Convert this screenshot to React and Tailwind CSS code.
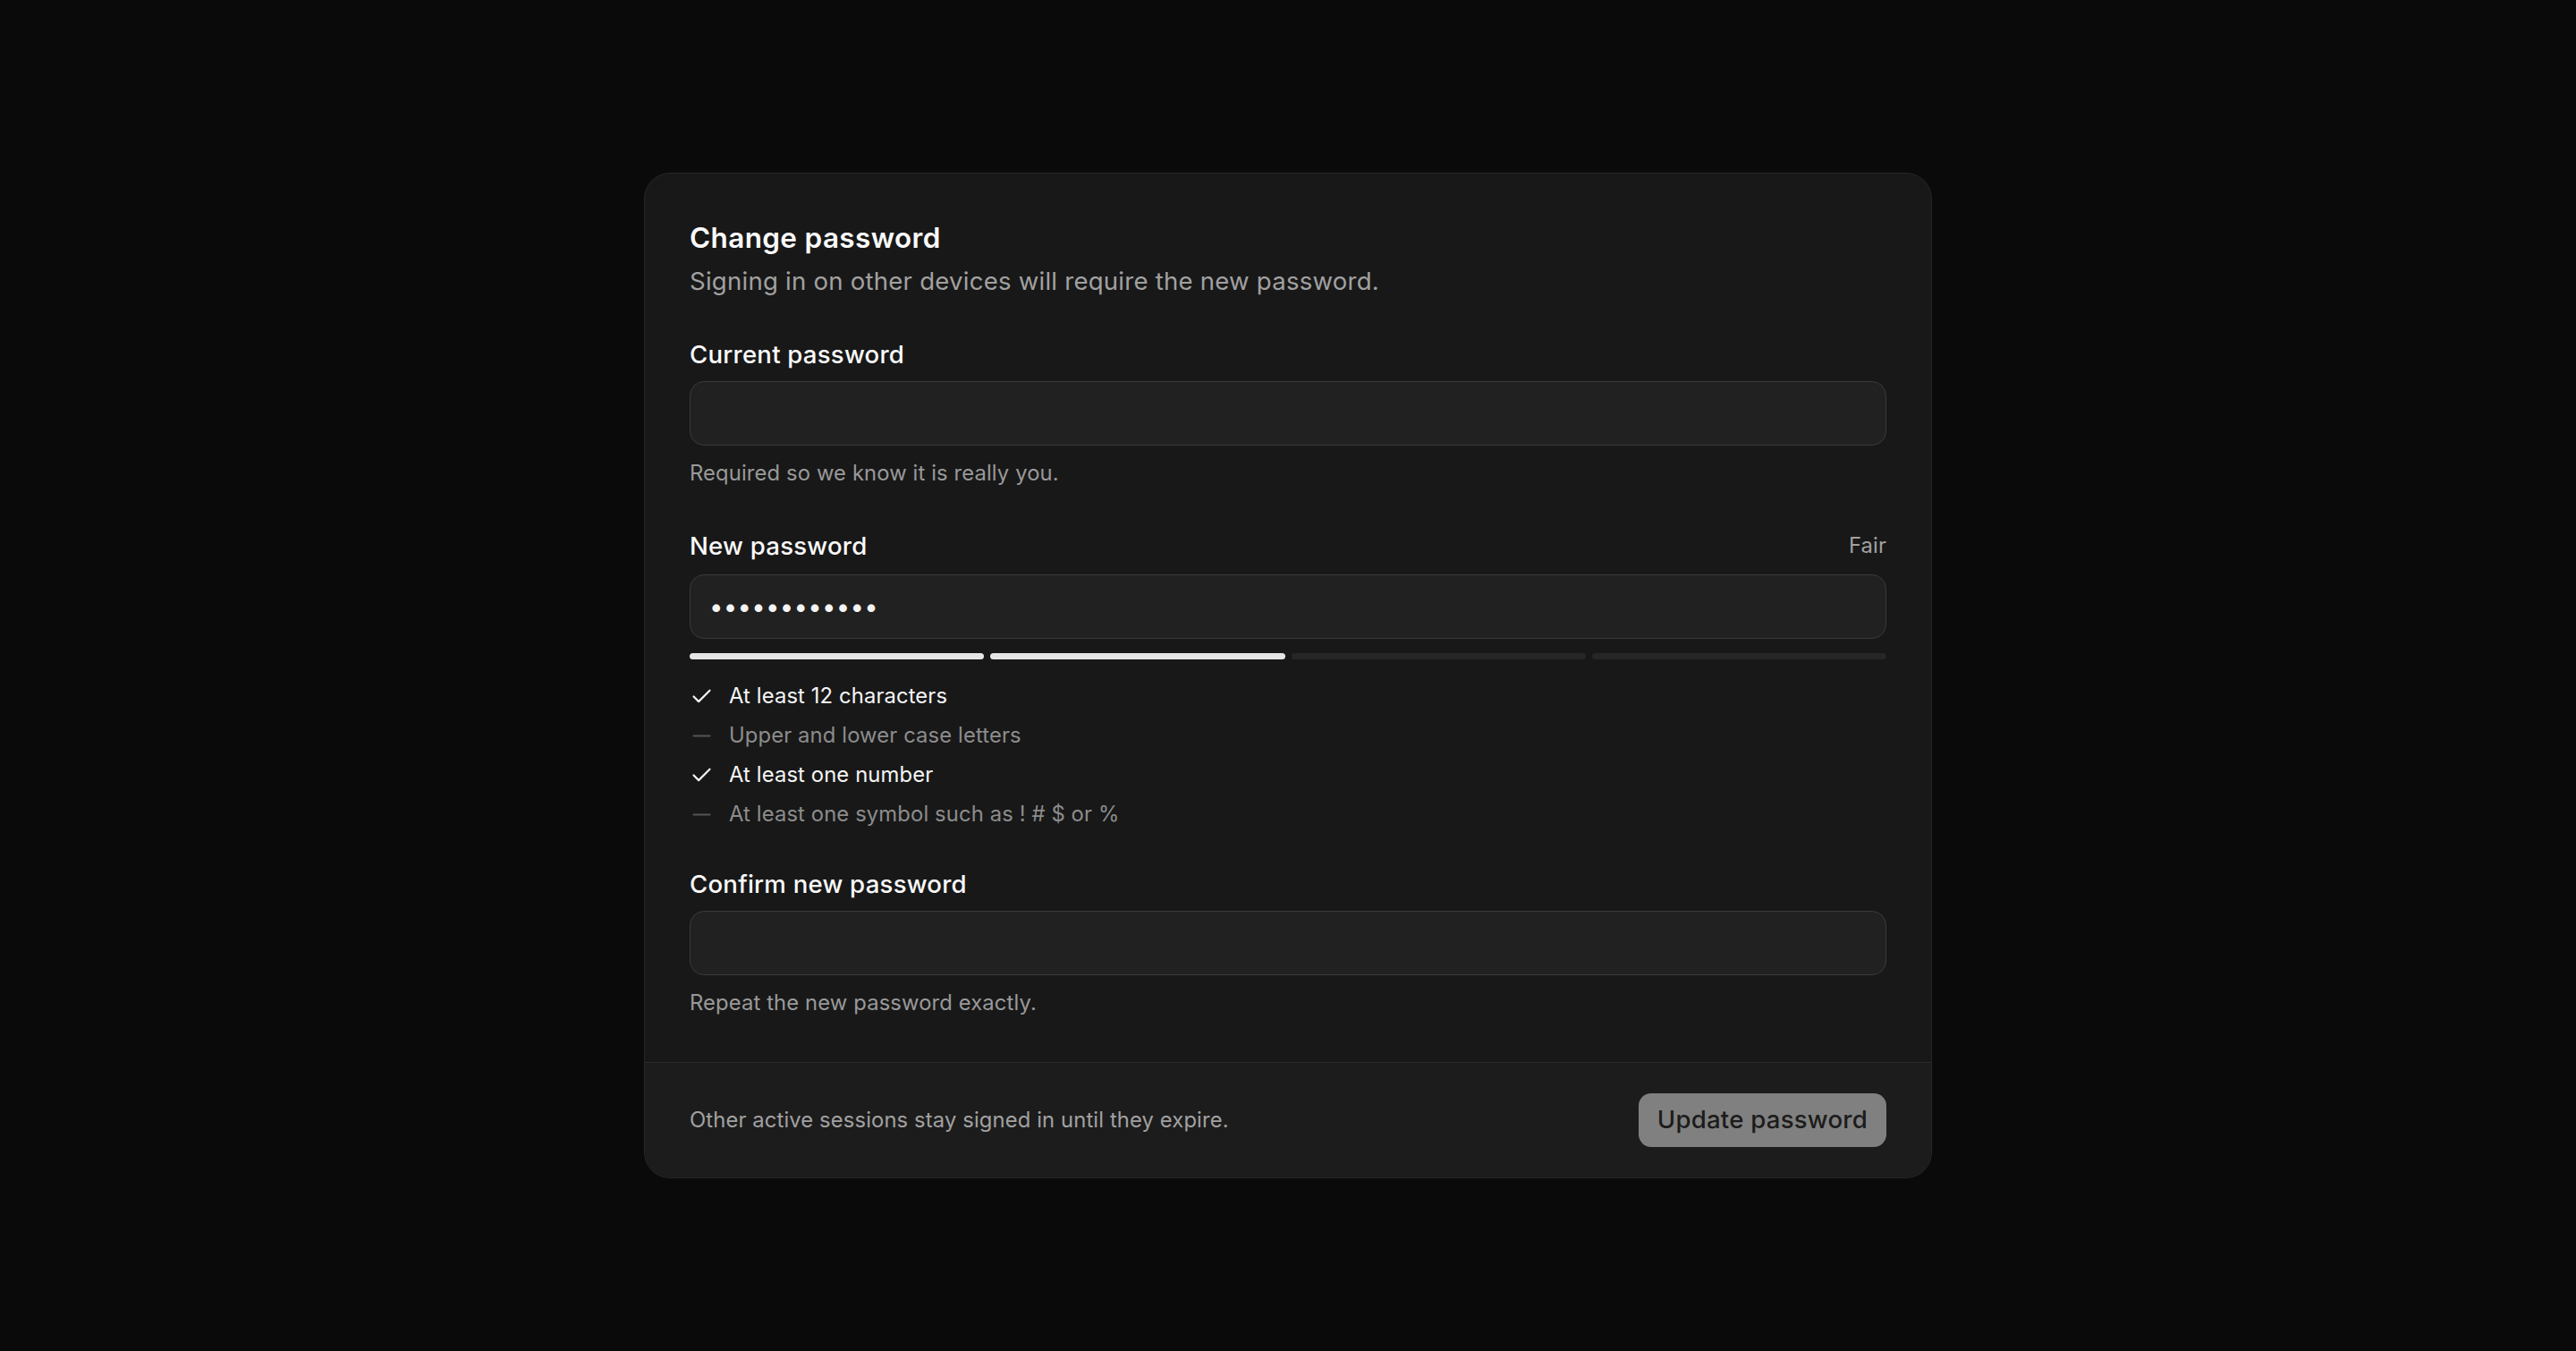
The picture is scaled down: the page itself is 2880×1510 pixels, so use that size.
import { useState } from 'react';

const rules = [
    { label: 'At least 12 characters', met: true },
    { label: 'Upper and lower case letters', met: false },
    { label: 'At least one number', met: true },
    { label: 'At least one symbol such as ! # $ or %', met: false },
];

const CheckIcon = () => (
    <svg viewBox="0 0 24 24" className="w-[27px] h-[27px] shrink-0" fill="none" stroke="#f5f5f5" strokeWidth="1.9" strokeLinecap="round" strokeLinejoin="round">
        <path d="M20 6 9 17l-5-5" />
    </svg>
);

const DashIcon = () => (
    <svg viewBox="0 0 24 24" className="w-[27px] h-[27px] shrink-0" fill="none" stroke="#555555" strokeWidth="1.9" strokeLinecap="round">
        <path d="M4 12h16" />
    </svg>
);

const inputCls = 'block w-full h-[72px] rounded-[16px] border border-[#3a3a3a] bg-[#212121] px-[21px] text-[27.6px] tracking-[0.22px] text-[#f5f5f5] outline-none';

const App = () => {
    const [current, setCurrent] = useState('');
    const [next, setNext] = useState('hunter2pass9');
    const [confirm, setConfirm] = useState('');

    const strength = 2;

    return (
        <div className="min-h-screen bg-[#0a0a0a] flex items-center justify-center [font-family:Inter,sans-serif]">
            <div className="w-[1440px] rounded-[29px] border border-[#262626] bg-[#181818] overflow-hidden">
                <div className="px-[50px] pt-[50px] pb-[49px]">
                    <h1 className="text-[31.5px] leading-[43px] tracking-[0.35px] font-semibold text-[#fafafa]">Change password</h1>
                    <p className="mt-[7px] text-[27.6px] leading-[40px] tracking-[0.22px] text-[#a1a1a1]">Signing in on other devices will require the new password.</p>

                    {/* Current password */}
                    <label className="block mt-[42px] mb-[10px] text-[27.6px] leading-[40px] tracking-[0.22px] font-medium text-[#fafafa]">Current password</label>
                    <input type="password" value={current} onChange={e => setCurrent(e.target.value)} className={inputCls} />
                    <p className="mt-[14px] text-[23.8px] leading-[34px] tracking-[0.12px] text-[#999999]">Required so we know it is really you.</p>

                    {/* New password */}
                    <div className="mt-[44px] mb-[12px] flex items-center justify-between">
                        <label className="text-[27.6px] leading-[40px] tracking-[0.22px] font-medium text-[#fafafa]">New password</label>
                        <span className="text-[23.8px] leading-[40px] tracking-[0.12px] text-[#a1a1a1]">Fair</span>
                    </div>
                    <input type="password" value={next} onChange={e => setNext(e.target.value)} className={inputCls} />
                    <div className="mt-[16px] flex gap-[7px]">
                        {[0, 1, 2, 3].map(i => (
                            <div key={i} className={`h-[7px] flex-1 rounded-full ${i < strength ? 'bg-[#e5e5e5]' : 'bg-[#262626]'}`} />
                        ))}
                    </div>
                    <ul className="mt-[23px] flex flex-col gap-[8px]">
                        {rules.map(r => (
                            <li key={r.label} className="flex items-center gap-[17px]">
                                {r.met ? <CheckIcon /> : <DashIcon />}
                                <span className={`text-[23.8px] leading-[36px] tracking-[0.12px] ${r.met ? 'text-[#f5f5f5]' : 'text-[#8c8c8c]'}`}>{r.label}</span>
                            </li>
                        ))}
                    </ul>

                    {/* Confirm */}
                    <label className="block mt-[40px] mb-[10px] text-[27.6px] leading-[40px] tracking-[0.22px] font-medium text-[#fafafa]">Confirm new password</label>
                    <input type="password" value={confirm} onChange={e => setConfirm(e.target.value)} className={inputCls} />
                    <p className="mt-[14px] text-[23.8px] leading-[34px] tracking-[0.12px] text-[#999999]">Repeat the new password exactly.</p>
                </div>

                <div className="border-t border-[#2a2a2a] bg-[#1c1c1c] px-[50px] py-[34px] flex items-center justify-between">
                    <p className="text-[23.8px] leading-[34px] tracking-[0.12px] text-[#a1a1a1]">Other active sessions stay signed in until they expire.</p>
                    <button disabled className="h-[60px] rounded-[14px] bg-[#808080] px-[21px] text-[27.6px] tracking-[0.22px] font-medium text-[#1c1c1c]">
                        Update password
                    </button>
                </div>
            </div>
        </div>
    );
};

export default App;
